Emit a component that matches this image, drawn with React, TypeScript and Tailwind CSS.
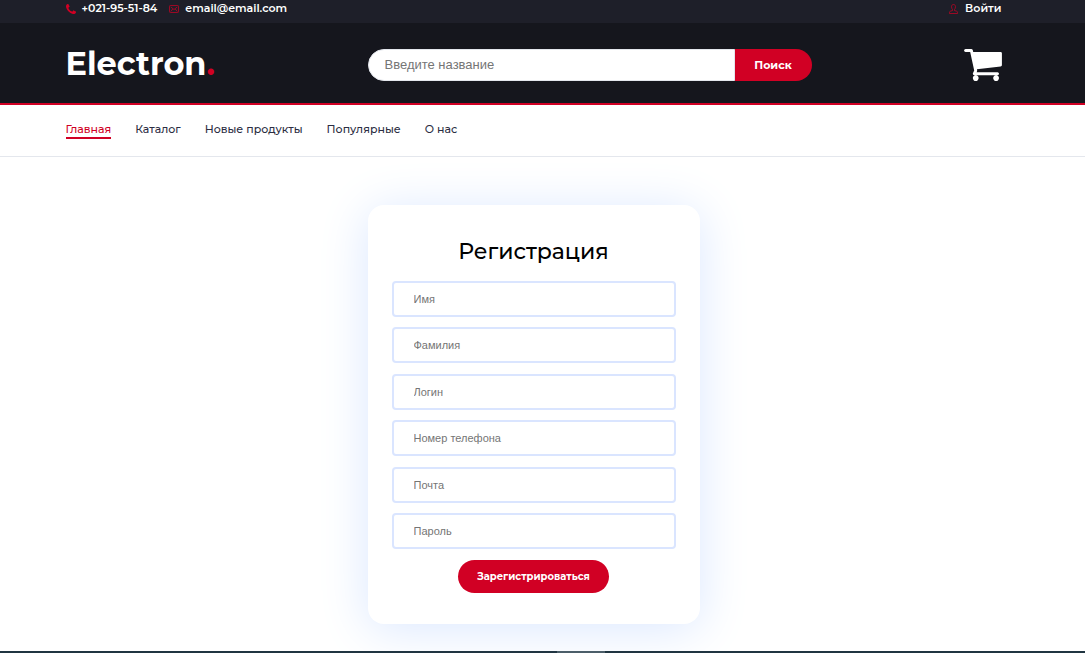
import { useState } from "react";

const fields = [
  { id: "name", label: "Имя", type: "text" },
  { id: "surname", label: "Фамилия", type: "text" },
  { id: "login", label: "Логин", type: "text" },
  { id: "phone", label: "Номер телефона", type: "tel" },
  { id: "email", label: "Почта", type: "email" },
  { id: "password", label: "Пароль", type: "password" },
];

const links = ["Главная", "Каталог", "Новые продукты", "Популярные", "О нас"];

function PhoneIcon() {
  return (
    <svg viewBox="0 0 1408 1408" className="size-[10px] fill-[#d10024]" aria-hidden="true">
      <path d="M1408 1112q0 27-10 70.500t-21 68.500q-21 50-122 106-94 51-186 51-27 0-53-3.500t-57.500-12.500-47-14.500-55.500-20.500-49-18q-98-35-175-83-127-79-264-216t-216-264q-48-77-83-175-3-9-18-49t-20.500-55.500-14.500-47-12.500-57.500-3.500-53q0-92 51-186 56-101 106-122 25-11 68.500-21t70.500-10q14 0 21 3 18 6 53 76 11 19 30 54t35 63.500 31 53.500q3 4 17.500 25t21.500 35.500 7 28.500q0 20-28.500 50t-62 55-62 53-28.500 46q0 9 5 22.500t8.500 20.500 14 24 11.500 19q76 137 174 235t235 174q2 1 19 11.500t24 14 20.500 8.500 22.500 5q18 0 46-28.500t53-62 55-62 50-28.500q14 0 28.500 7t35.500 21.500 25 17.500q25 15 53.500 31t63.500 35 54 30q70 35 76 53 3 7 3 21z" />
    </svg>
  );
}

function MailIcon() {
  return (
    <svg viewBox="0 0 20 16" className="h-[8px] w-[10px] fill-none stroke-[#d10024] stroke-[1.4]" aria-hidden="true">
      <rect x="1" y="1" width="18" height="14" rx="1.500" />
      <path d="M3.500 4 10 9l6.500-5M3.500 13l4-5M16.500 13l-4-5" />
    </svg>
  );
}

function UserIcon() {
  return (
    <svg viewBox="0 0 18 20" className="h-[10px] w-[9px] fill-none stroke-[#d10024] stroke-[1.4]" aria-hidden="true">
      <path d="M9 1C6.500 1 5 2.800 5 5.500C5 8 6 9.500 7 11v2L2.500 14.500C1.500 15 1 15.500 1 16.500V19h16v-2.500c0-1-.5-1.500-1.500-2L11 13v-2c1-1.500 2-3 2-5.500C13 2.800 11.500 1 9 1Z" />
    </svg>
  );
}

function CartIcon() {
  return (
    <svg viewBox="0 256 1664 1408" className="h-8 w-[38px] fill-white" aria-hidden="true">
      <path d="M640 1536q0 52-38 90t-90 38-90-38-38-90 38-90 90-38 90 38 38 90zm896 0q0 52-38 90t-90 38-90-38-38-90 38-90 90-38 90 38 38 90zM1664 448v512q0 24-16.500 42.500t-40.500 21.500l-1044 122q13 60 13 70 0 16-24 64h920q26 0 45 19t19 45-19 45-45 19h-1024q-26 0-45-19t-19-45q0-11 8-31.500t16-36 21.500-40 15.500-29.500l-177-823h-204q-26 0-45-19t-19-45 19-45 45-19h256q16 0 28.500 6.500t19.500 15.500 13 24.500 8 26 5.500 29.500 4.500 26h1201q26 0 45 19t19 45z" />
    </svg>
  );
}

export default function App() {
  const [active, setActive] = useState("Главная");

  return (
    <div className="flex min-h-screen flex-col bg-white font-['Montserrat','Inter',sans-serif]">
      <header>
        <div className="bg-[#1e1f29]">
          <div className="mx-auto flex h-[23px] w-full max-w-[970px] items-start justify-between pr-[26px] pl-2 text-[11px] leading-[17px] font-semibold text-white">
            <div className="flex gap-3">
              <a href="tel:+021955184" className="flex items-center gap-[6px]">
                <PhoneIcon />
                +021-95-51-84
              </a>
              <a href="mailto:email@email.com" className="flex items-center gap-[6px]">
                <MailIcon />
                email@email.com
              </a>
            </div>
            <a href="#login" className="flex items-center gap-[7px]">
              <UserIcon />
              Войти
            </a>
          </div>
        </div>
        <div className="border-b-2 border-[#d10024] bg-[#15161d]">
          <div className="mx-auto flex h-20 w-full max-w-[970px] items-center pt-1 pr-[26px] pl-2">
            <a href="#home" className="w-[302px] pb-[2px] text-[32px] leading-10 font-bold text-white">
              Electron<span className="text-[#d10024]">.</span>
            </a>
            <form className="flex h-8 w-[444px]" onSubmit={(e) => e.preventDefault()}>
              <input
                type="search"
                aria-label="Введите название"
                placeholder="Введите название"
                className="min-w-0 flex-1 rounded-l-full border border-[#e4e7ed] bg-white px-4 font-['Liberation_Sans',sans-serif] text-[13px] outline-none placeholder:text-[#757575]"
              />
              <button type="submit" className="w-[77px] rounded-r-full bg-[#d10024] text-[11px] font-bold text-white">
                Поиск
              </button>
            </form>
            <a href="#cart" aria-label="Корзина" className="ml-auto">
              <CartIcon />
            </a>
          </div>
        </div>
      </header>

      <nav className="border-b border-[#e4e7ed]">
        <div className="mx-auto flex h-[51px] w-full max-w-[970px] items-center gap-6 px-2 pb-[2px] text-[11px] leading-4 font-medium text-[#2b2d42]">
          {links.map((link) => (
            <a
              key={link}
              href="#menu"
              onClick={() => setActive(link)}
              className={link === active ? "border-b-2 border-[#d10024] text-[#d10024]" : "border-b-2 border-transparent"}
            >
              {link}
            </a>
          ))}
        </div>
      </nav>

      <main className="mx-auto w-full max-w-[970px] flex-1 px-2 pt-12 pb-[27px]">
        <form
          className="ml-[302px] flex w-[332px] flex-col items-center rounded-2xl bg-white px-6 pt-[31px] pb-[31px] shadow-[0_5px_50px_#dae7ff]"
          onSubmit={(e) => e.preventDefault()}
        >
          <h1 className="mb-[13px] text-[22px] leading-8 font-medium text-black">Регистрация</h1>
          <div className="grid h-67 w-full content-between">
            {fields.map((f) => (
              <input
                key={f.id}
                id={f.id}
                type={f.type}
                aria-label={f.label}
                placeholder={f.label}
                className="h-9 w-full rounded border-2 border-[#dae5ff] px-5 font-['Liberation_Sans',sans-serif] text-[11px] outline-none placeholder:text-[#757575]"
              />
            ))}
          </div>
          <button type="submit" className="mt-[11px] h-[33px] w-[151px] rounded-full bg-[#d10024] text-[10px] font-bold text-white">
            Зарегистрироваться
          </button>
        </form>
      </main>

      <footer className="flex h-[2px] justify-center bg-[#203541]">
        <div className="ml-[77px] w-12 bg-[#4b5e69]" />
      </footer>
    </div>
  );
}
